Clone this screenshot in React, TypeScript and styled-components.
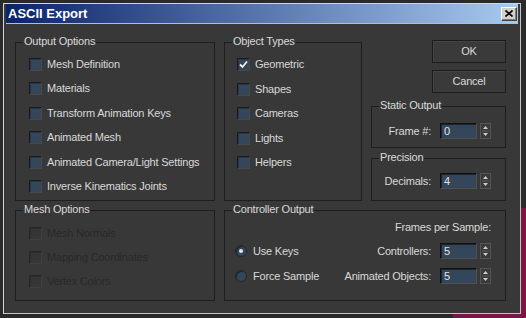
import React from 'react';
import styled, { createGlobalStyle } from 'styled-components';

const Global = createGlobalStyle`
  html, body { margin: 0; padding: 0; }
  body {
    width: 526px;
    height: 318px;
    overflow: hidden;
    background:
      linear-gradient(#7a1747, #7a1747) no-repeat 453px 208px / 73px 110px,
      #2a2a2a;
    font-family: "Liberation Sans", Arial, sans-serif;
    font-size: 11px;
    letter-spacing: -0.2px;
  }
`;

const PANEL = '#383838';
const TEXT = '#d9d9d9';
const FIELD = '#34475a';

const Dialog = styled.div`
  margin: 3px 0 0 3px;
  width: 518px;
  height: 311px;
  box-sizing: border-box;
  border: 1px solid #d6d6d6;
  border-right-color: #c4c4c4;
  border-bottom-color: #c4c4c4;
  padding: 0 2px 2px;
  background: ${PANEL};
  display: flex;
  flex-direction: column;
`;

const TitleBar = styled.div`
  height: 19px;
  border-bottom: 1px solid #bdbdbd;
  background: linear-gradient(to right, #0a246a, #a6caf0);
  display: flex;
  align-items: center;
  justify-content: space-between;
  padding: 0 1px 0 2px;
`;

const Title = styled.span`
  color: #fff;
  font-weight: bold;
  font-size: 13px;
  letter-spacing: 0;
`;

const CloseButton = styled.div`
  width: 16px;
  height: 14px;
  box-sizing: border-box;
  background: #d4d0c8;
  border: 1px solid;
  border-color: #ffffff #404040 #404040 #ffffff;
  box-shadow: inset -1px -1px 0 #808080;
  display: flex;
  align-items: center;
  justify-content: center;
`;

const Body = styled.div`
  flex: 1;
  padding: 18px 0 0 9px;
  display: grid;
  grid-template-columns: 200px 138px 135px;
  grid-template-rows: 159px 91px;
  column-gap: 9px;
  row-gap: 9px;
`;

const Group = styled.div<{ $pt: number; $pl: number; $span?: boolean }>`
  position: relative;
  box-sizing: border-box;
  border: 1px solid #1e1e1e;
  padding: ${p => p.$pt}px 14px 0 ${p => p.$pl}px;
  ${p => (p.$span ? 'grid-column: 2 / span 2;' : '')}
`;

const Legend = styled.span`
  position: absolute;
  top: -8px;
  left: 7px;
  padding: 0 1px;
  background: ${PANEL};
  color: ${TEXT};
  line-height: 13px;
  white-space: nowrap;
`;

const CheckList = styled.div<{ $gap: number }>`
  display: grid;
  grid-auto-rows: 13px;
  row-gap: ${p => p.$gap}px;
`;

const Row = styled.div<{ $disabled?: boolean }>`
  display: flex;
  align-items: center;
  gap: 5px;
  height: 13px;
  line-height: 13px;
  white-space: nowrap;
  color: ${p => (p.$disabled ? '#282828' : TEXT)};
`;

const Box = styled.span<{ $disabled?: boolean }>`
  width: 13px;
  height: 13px;
  box-sizing: border-box;
  flex: none;
  border: 1px solid;
  border-color: ${p => (p.$disabled ? '#262626 #3f3f3f #3f3f3f #262626' : '#1a1a1a #484848 #484848 #1a1a1a')};
  background: ${p => (p.$disabled ? '#353535' : FIELD)};
  box-shadow: inset 1px 1px 0 ${p => (p.$disabled ? '#2e2e2e' : '#27374a')};
  display: flex;
  align-items: center;
  justify-content: center;
`;

const Radio = styled.span<{ $on?: boolean }>`
  width: 12px;
  height: 12px;
  box-sizing: border-box;
  flex: none;
  border-radius: 50%;
  border: 1px solid #262626;
  background: ${FIELD};
  box-shadow: inset 1px 1px 0 #1c2630;
  display: flex;
  align-items: center;
  justify-content: center;
  &::after {
    content: '';
    width: 4px;
    height: 4px;
    border-radius: 50%;
    background: ${p => (p.$on ? '#e6e6e6' : 'transparent')};
  }
`;

const RightColumn = styled.div`
  display: flex;
  flex-direction: column;
  align-items: stretch;
`;

const Button = styled.div<{ $mt: number }>`
  align-self: flex-end;
  margin-top: ${p => p.$mt}px;
  width: 74px;
  height: 23px;
  box-sizing: border-box;
  border: 1px solid #1c1c1c;
  background: #3a3a3a;
  box-shadow: inset 1px 1px 0 #444;
  color: ${TEXT};
  display: flex;
  align-items: center;
  justify-content: center;
  line-height: 13px;
`;

const SmallGroup = styled.div<{ $mt: number; $h: number; $pt: number }>`
  position: relative;
  margin-top: ${p => p.$mt}px;
  height: ${p => p.$h}px;
  box-sizing: border-box;
  border: 1px solid #1e1e1e;
  padding: ${p => p.$pt}px 14px 0 0;
  display: flex;
  justify-content: flex-end;
  align-items: flex-start;
`;

const Field = styled.div`
  display: flex;
  align-items: center;
  height: 16px;
  color: ${TEXT};
  white-space: nowrap;
`;

const FieldLabel = styled.span`
  margin-right: 9px;
  line-height: 13px;
`;

const Input = styled.div`
  width: 37px;
  height: 16px;
  box-sizing: border-box;
  border: 1px solid;
  border-color: #101010 #505050 #505050 #101010;
  box-shadow: inset 1px 1px 0 #1a2430;
  background: ${FIELD};
  color: #e2e2e2;
  padding-left: 3px;
  line-height: 14px;
`;

const SpinnerBox = styled.div`
  margin-left: 3px;
  width: 11px;
  height: 16px;
  box-sizing: border-box;
  border: 1px solid #555;
  background: #3a3a3a;
  display: flex;
  align-items: center;
  justify-content: center;
`;

const CtrlGrid = styled.div`
  display: grid;
  grid-template-columns: auto 1fr;
  grid-template-rows: 13px 16px 16px;
  row-gap: 9px;
  padding-top: 10px;
`;

const FpsLabel = styled.div`
  grid-column: 1 / span 2;
  justify-self: end;
  color: ${TEXT};
  line-height: 13px;
`;

const RadioRow = styled(Row)`
  align-self: center;
  gap: 6px;
`;

const RightField = styled(Field)`
  justify-self: end;
`;

const Spinner = () => (
  <SpinnerBox>
    <svg width="9" height="14" viewBox="0 0 9 14">
      <path d="M4.5 2 L7 5 L2 5 Z" fill="#cfcfcf" />
      <line x1="1" y1="7" x2="8" y2="7" stroke="#5a5a5a" strokeWidth="1" />
      <path d="M2 9 L7 9 L4.5 12 Z" fill="#cfcfcf" />
    </svg>
  </SpinnerBox>
);

const Check = ({ checked, disabled, label }: { checked?: boolean; disabled?: boolean; label: string }) => (
  <Row $disabled={disabled}>
    <Box $disabled={disabled}>
      {checked && (
        <svg width="9" height="9" viewBox="0 0 9 9">
          <polyline points="1,4.5 3.5,7 8,1.5" fill="none" stroke="#f0f0f0" strokeWidth="1.8" />
        </svg>
      )}
    </Box>
    {label}
  </Row>
);

const NumField = ({ label, value }: { label: string; value: string }) => (
  <>
    <FieldLabel>{label}</FieldLabel>
    <Input>{value}</Input>
    <Spinner />
  </>
);

export default function App() {
  return (
    <>
      <Global />
      <Dialog>
        <TitleBar>
          <Title>ASCII Export</Title>
          <CloseButton>
            <svg width="8" height="7" viewBox="0 0 8 7">
              <path d="M0.5 0.5 L7.5 6.5 M7.5 0.5 L0.5 6.5" stroke="#000" strokeWidth="1.6" />
            </svg>
          </CloseButton>
        </TitleBar>
        <Body>
          <Group $pt={15} $pl={13}>
            <Legend>Output Options</Legend>
            <CheckList $gap={11.4}>
              <Check label="Mesh Definition" />
              <Check label="Materials" />
              <Check label="Transform Animation Keys" />
              <Check label="Animated Mesh" />
              <Check label="Animated Camera/Light Settings" />
              <Check label="Inverse Kinematics Joints" />
            </CheckList>
          </Group>
          <Group $pt={15} $pl={12}>
            <Legend>Object Types</Legend>
            <CheckList $gap={11.6}>
              <Check label="Geometric" checked />
              <Check label="Shapes" />
              <Check label="Cameras" />
              <Check label="Lights" />
              <Check label="Helpers" />
            </CheckList>
          </Group>
          <RightColumn>
            <Button $mt={-2}>OK</Button>
            <Button $mt={7}>Cancel</Button>
            <SmallGroup $mt={13} $h={42} $pt={16}>
              <Legend>Static Output</Legend>
              <Field>
                <NumField label="Frame #:" value="0" />
              </Field>
            </SmallGroup>
            <SmallGroup $mt={10} $h={43} $pt={14}>
              <Legend>Precision</Legend>
              <Field>
                <NumField label="Decimals:" value="4" />
              </Field>
            </SmallGroup>
          </RightColumn>
          <Group $pt={16} $pl={13}>
            <Legend>Mesh Options</Legend>
            <CheckList $gap={11}>
              <Check label="Mesh Normals" disabled />
              <Check label="Mapping Coordinates" disabled />
              <Check label="Vertex Colors" disabled />
            </CheckList>
          </Group>
          <Group $pt={0} $pl={10} $span>
            <Legend>Controller Output</Legend>
            <CtrlGrid>
              <FpsLabel>Frames per Sample:</FpsLabel>
              <RadioRow>
                <Radio $on />
                Use Keys
              </RadioRow>
              <RightField>
                <NumField label="Controllers:" value="5" />
              </RightField>
              <RadioRow>
                <Radio />
                Force Sample
              </RadioRow>
              <RightField>
                <NumField label="Animated Objects:" value="5" />
              </RightField>
            </CtrlGrid>
          </Group>
        </Body>
      </Dialog>
    </>
  );
}
